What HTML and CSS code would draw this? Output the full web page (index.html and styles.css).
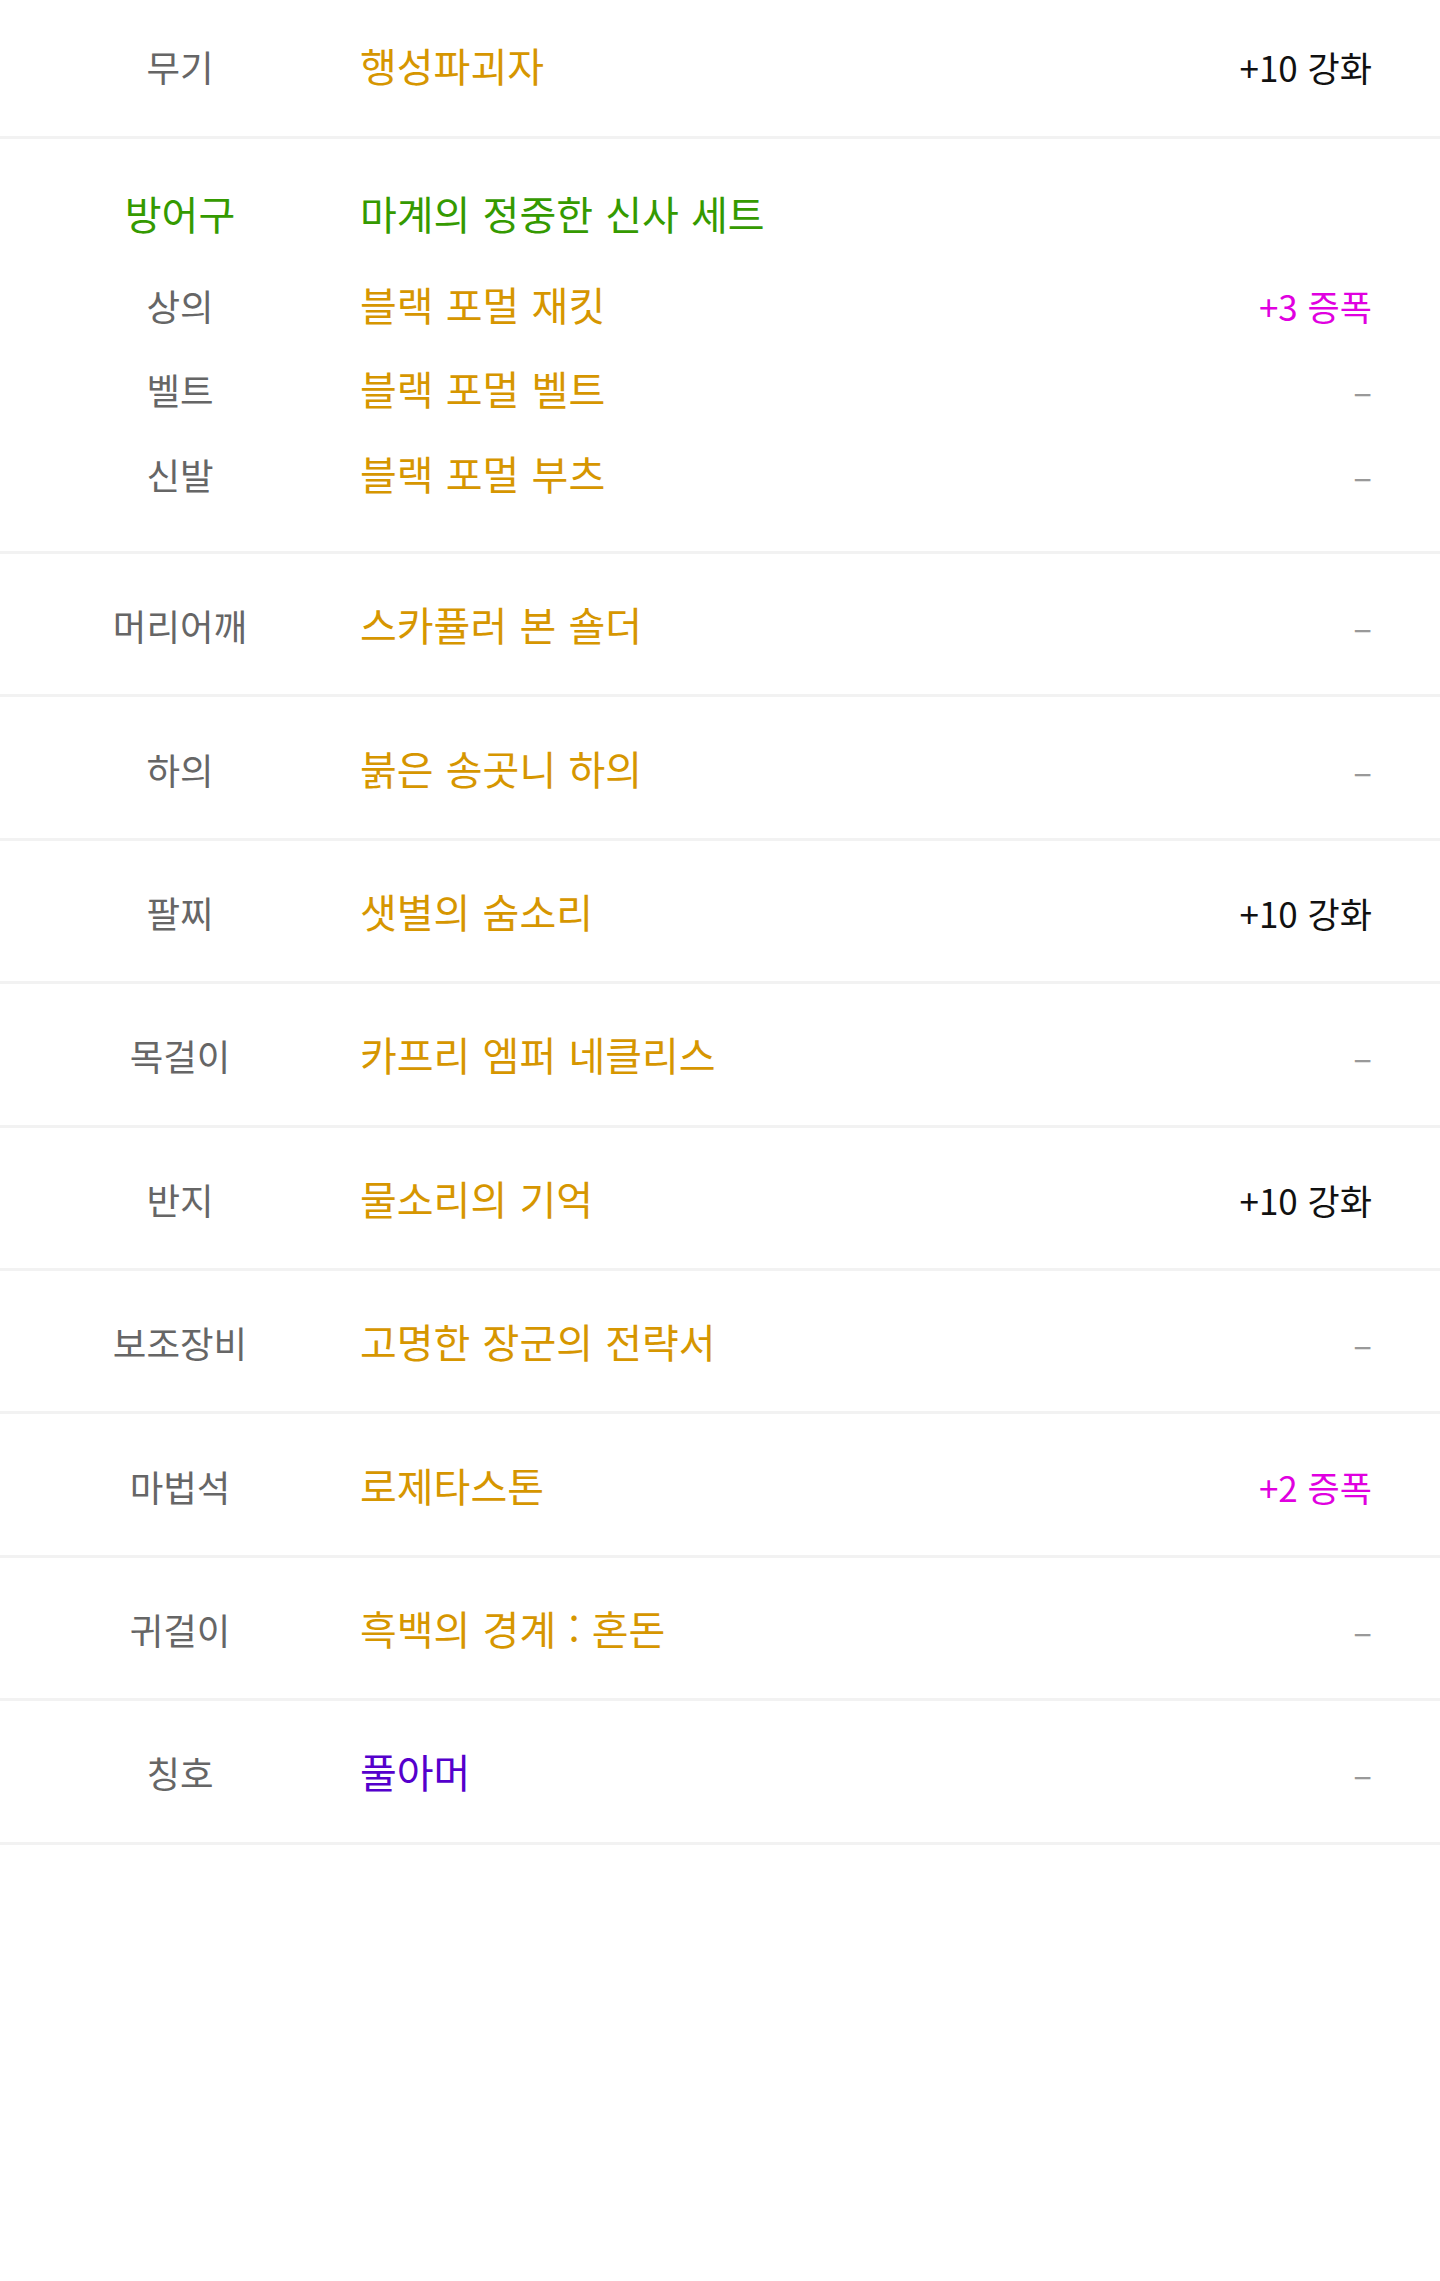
FILE: index.html
```html
<!DOCTYPE html>
<html lang="ko">
<head>
    <title>장비</title>
    <meta charset="UTF-8">
    <link rel="stylesheet" href="styles.css">
</head>
<body>
    <!-- 장비 목록 -->
    <div class="equip-list">
        <div class="equip-row first">
            <div class="equip-line">
                <span class="slot">무기</span>
                <span class="item gold">행성파괴자</span>
                <span class="note">+10 강화</span>
            </div>
        </div>

        <div class="equip-group">
            <div class="equip-line group-head">
                <span class="slot set">방어구</span>
                <span class="item set">마계의 정중한 신사 세트</span>
                <span class="note"></span>
            </div>
            <div class="equip-line sub-row">
                <span class="slot">상의</span>
                <span class="item gold">블랙 포멀 재킷</span>
                <span class="note amp">+3 증폭</span>
            </div>
            <div class="equip-line sub-row">
                <span class="slot">벨트</span>
                <span class="item gold">블랙 포멀 벨트</span>
                <span class="note none">–</span>
            </div>
            <div class="equip-line sub-row">
                <span class="slot">신발</span>
                <span class="item gold">블랙 포멀 부츠</span>
                <span class="note none">–</span>
            </div>
        </div>

        <div class="equip-row">
            <div class="equip-line">
                <span class="slot">머리어깨</span>
                <span class="item gold">스카퓰러 본 숄더</span>
                <span class="note none">–</span>
            </div>
        </div>
        <div class="equip-row">
            <div class="equip-line">
                <span class="slot">하의</span>
                <span class="item gold">붉은 송곳니 하의</span>
                <span class="note none">–</span>
            </div>
        </div>
        <div class="equip-row">
            <div class="equip-line">
                <span class="slot">팔찌</span>
                <span class="item gold">샛별의 숨소리</span>
                <span class="note">+10 강화</span>
            </div>
        </div>
        <div class="equip-row">
            <div class="equip-line">
                <span class="slot">목걸이</span>
                <span class="item gold">카프리 엠퍼 네클리스</span>
                <span class="note none">–</span>
            </div>
        </div>
        <div class="equip-row">
            <div class="equip-line">
                <span class="slot">반지</span>
                <span class="item gold">물소리의 기억</span>
                <span class="note">+10 강화</span>
            </div>
        </div>
        <div class="equip-row">
            <div class="equip-line">
                <span class="slot">보조장비</span>
                <span class="item gold">고명한 장군의 전략서</span>
                <span class="note none">–</span>
            </div>
        </div>
        <div class="equip-row">
            <div class="equip-line">
                <span class="slot">마법석</span>
                <span class="item gold">로제타스톤</span>
                <span class="note amp">+2 증폭</span>
            </div>
        </div>
        <div class="equip-row">
            <div class="equip-line">
                <span class="slot">귀걸이</span>
                <span class="item gold">흑백의 경계 : 혼돈</span>
                <span class="note none">–</span>
            </div>
        </div>
        <div class="equip-row">
            <div class="equip-line">
                <span class="slot">칭호</span>
                <span class="item rare">풀아머</span>
                <span class="note none">–</span>
            </div>
        </div>
    </div>
</body>
</html>
```

FILE: styles.css
```css
* {
    box-sizing: border-box;
}
body {
    margin: 0;
    background: #fff;
    font-family: "Noto Sans CJK KR", "Noto Sans", sans-serif;
    color: #111;
}
.equip-list {
    width: 100%;
}
.equip-row {
    height: 143.4px;
    display: flex;
    align-items: center;
    border-bottom: 3px solid #f2f2f2;
}
.equip-row.first {
    height: 138.5px;
    padding-bottom: 6px;
}
.equip-line {
    width: 100%;
    display: grid;
    grid-template-columns: 360px 1fr auto;
    align-items: baseline;
    padding-right: 68px;
    line-height: 1.25;
}
.slot {
    font-size: 36.5px;
    color: #666;
    text-align: center;
}
.item {
    font-size: 40px;
    word-spacing: 1px;
}
.note {
    font-size: 35px;
    color: #111;
    text-align: right;
}
.gold {
    color: #d69600;
}
.rare {
    color: #5500cc;
}
.set {
    color: #359a00;
    font-size: 40px;
}
.amp {
    color: #e000e0;
}
.none {
    color: #999;
}
.equip-group {
    padding: 48px 0 36px;
    border-bottom: 3px solid #f2f2f2;
}
.group-head {
    height: 52px;
    align-items: center;
    margin-bottom: 23px;
}
.sub-row {
    height: 84.5px;
    align-content: center;
}
```
